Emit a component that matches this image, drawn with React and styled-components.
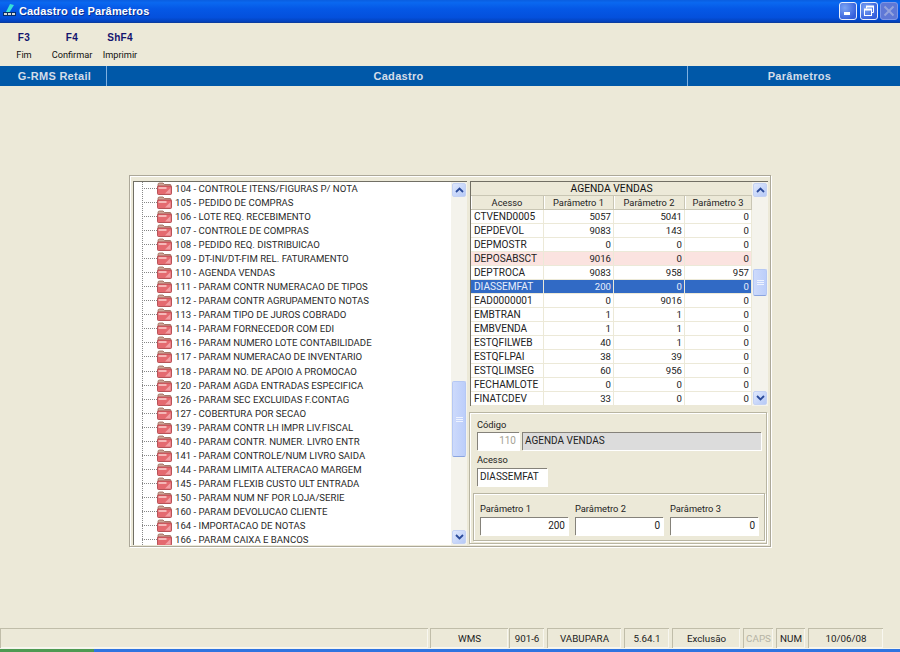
import styled, { createGlobalStyle } from "styled-components";

const GlobalStyle = createGlobalStyle`
  html, body { margin: 0; padding: 0; background: #ece9d8; }
  body { font-family: Roboto, "Liberation Sans", Arial, sans-serif; font-size: 10.5px; color: #111; }
`;

const TREE_ITEMS = [
  "104 - CONTROLE ITENS/FIGURAS P/ NOTA",
  "105 - PEDIDO DE COMPRAS",
  "106 - LOTE REQ. RECEBIMENTO",
  "107 - CONTROLE DE COMPRAS",
  "108 - PEDIDO REQ. DISTRIBUICAO",
  "109 - DT-INI/DT-FIM REL. FATURAMENTO",
  "110 - AGENDA VENDAS",
  "111 - PARAM CONTR NUMERACAO DE TIPOS",
  "112 - PARAM CONTR AGRUPAMENTO NOTAS",
  "113 - PARAM TIPO DE JUROS COBRADO",
  "114 - PARAM FORNECEDOR COM EDI",
  "116 - PARAM NUMERO LOTE CONTABILIDADE",
  "117 - PARAM NUMERACAO DE INVENTARIO",
  "118 - PARAM NO. DE APOIO A PROMOCAO",
  "120 - PARAM AGDA ENTRADAS ESPECIFICA",
  "126 - PARAM SEC EXCLUIDAS F.CONTAG",
  "127 - COBERTURA POR SECAO",
  "139 - PARAM CONTR LH IMPR LIV.FISCAL",
  "140 - PARAM CONTR. NUMER. LIVRO ENTR",
  "141 - PARAM CONTROLE/NUM LIVRO SAIDA",
  "144 - PARAM LIMITA ALTERACAO MARGEM",
  "145 - PARAM FLEXIB CUSTO ULT ENTRADA",
  "150 - PARAM NUM NF POR LOJA/SERIE",
  "160 - PARAM DEVOLUCAO CLIENTE",
  "164 - IMPORTACAO DE NOTAS",
  "166 - PARAM CAIXA E BANCOS",
];

const GRID_ROWS = [
  ["CTVEND0005", 5057, 5041, 0],
  ["DEPDEVOL", 9083, 143, 0],
  ["DEPMOSTR", 0, 0, 0],
  ["DEPOSABSCT", 9016, 0, 0, "pink"],
  ["DEPTROCA", 9083, 958, 957],
  ["DIASSEMFAT", 200, 0, 0, "selected"],
  ["EAD0000001", 0, 9016, 0],
  ["EMBTRAN", 1, 1, 0],
  ["EMBVENDA", 1, 1, 0],
  ["ESTQFILWEB", 40, 1, 0],
  ["ESTQFLPAI", 38, 39, 0],
  ["ESTQLIMSEG", 60, 956, 0],
  ["FECHAMLOTE", 0, 0, 0],
  ["FINATCDEV", 33, 0, 0],
];

const STATUS_CELLS = [
  { text: "", width: 428, gap: 0 },
  { text: "WMS", width: 78, gap: 2 },
  { text: "901-6", width: 35, gap: 1 },
  { text: "VABUPARA", width: 74, gap: 3 },
  { text: "5.64.1", width: 45, gap: 3 },
  { text: "Exclusão", width: 68, gap: 3 },
  { text: "CAPS", width: 30, gap: 3, muted: true },
  { text: "NUM", width: 29, gap: 3 },
  { text: "10/06/08", width: 75, gap: 3 },
];

const Page = styled.div`
  width: 900px;
  height: 652px;
  overflow: hidden;
  display: flex;
  flex-direction: column;
  background: #ece9d8;
`;

const TitleBar = styled.div`
  height: 23px;
  display: flex;
  align-items: center;
  padding: 0 2px 0 3px;
  box-sizing: border-box;
  background: linear-gradient(180deg, #0a5ee0 0%, #0a68f0 12%, #0558e6 40%, #0450dc 80%, #0340b8 100%);
  border-bottom: 1px solid #0a3ca0;
`;

const TitleText = styled.div`
  flex: 1;
  padding-left: 3px;
  color: #fff;
  font-family: "Liberation Sans", Arial, sans-serif;
  font-weight: bold;
  font-size: 11px;
  letter-spacing: 0.15px;
  text-shadow: 1px 1px 0 #0a2f90;
`;

const WinButton = styled.div`
  width: 18px;
  height: 18px;
  margin-left: ${(p) => p.$gap}px;
  box-sizing: border-box;
  border: 1px solid ${(p) => (p.$off ? "#7f97e6" : "#e8eefc")};
  border-radius: 3px;
  display: flex;
  align-items: center;
  justify-content: center;
  background: ${(p) =>
    p.$off ? "#5f78d6" : "radial-gradient(circle at 30% 30%, #7ba4f4, #3560dc 75%)"};
`;

const Toolbar = styled.div`
  height: 43px;
  display: flex;
  padding: 9px 0 0 0;
  box-sizing: border-box;
`;

const ToolButton = styled.div`
  width: ${(p) => p.$w}px;
  display: flex;
  flex-direction: column;
  align-items: center;
  gap: 6px;
`;

const ToolKey = styled.div`
  font-family: "Liberation Sans", Arial, sans-serif;
  font-weight: bold;
  font-size: 10px;
  color: #14146e;
  letter-spacing: 0.3px;
`;

const ToolLabel = styled.div`
  font-size: 9.2px;
  color: #111;
`;

const ModuleBar = styled.div`
  height: 20px;
  display: flex;
  background: #0058a8;
`;

const ModuleCell = styled.div`
  width: ${(p) => p.$w}px;
  box-sizing: border-box;
  padding-left: ${(p) => p.$pad || 0}px;
  display: flex;
  align-items: center;
  justify-content: center;
  border-left: ${(p) => (p.$divider ? "1px solid #7fb0e0" : "none")};
  color: #d4dde8;
  font-family: "Liberation Sans", Arial, sans-serif;
  font-weight: bold;
  font-size: 11px;
  letter-spacing: 0.3px;
`;

const Main = styled.div`
  flex: 1;
  padding: 89px 0 0 129px;
  box-sizing: border-box;
`;

const Panel = styled.div`
  width: 642px;
  height: 372px;
  box-sizing: border-box;
  border: 1px solid #aca899;
  box-shadow: inset 1px 1px 0 #fff, 1px 1px 0 #fff;
  padding: 5px 2px 1px 3px;
  display: flex;
`;

const TreeBox = styled.div`
  width: 334px;
  height: 364px;
  flex: none;
  display: flex;
  background: #fff;
  border-top: 1px solid #716f64;
  border-left: 1px solid #716f64;
  box-sizing: border-box;
`;

const TreeList = styled.div`
  flex: 1;
  overflow: hidden;
  padding-left: 8px;
  background-image: linear-gradient(#888 50%, transparent 50%);
  background-size: 1px 2px;
  background-repeat: repeat-y;
  background-position: 8px 0;
`;

const TreeRow = styled.div`
  height: 14.08px;
  display: flex;
  align-items: center;
  white-space: nowrap;
  &:first-child {
    margin-top: -1px;
  }
`;

const TreeDots = styled.div`
  width: 15px;
  height: 0;
  border-top: 1px dotted #888;
`;

const TreeLabel = styled.span`
  margin-left: 3px;
  font-size: 9.6px;
  color: #2a2a2a;
`;

const Scrollbar = styled.div`
  width: 16px;
  flex: none;
  height: ${(p) => p.$h}px;
  background: #f4f3ec;
  display: flex;
  flex-direction: column;
  box-sizing: border-box;
  padding: 1px;
`;

const ScrollButton = styled.div`
  height: 14px;
  flex: none;
  border-radius: 2px;
  border: 1px solid #c4d2f4;
  box-sizing: border-box;
  background: linear-gradient(135deg, #dfe8fd, #b6c9f6);
  display: flex;
  align-items: center;
  justify-content: center;
`;

const ScrollSpace = styled.div`
  flex: ${(p) => (p.$h ? "none" : 1)};
  height: ${(p) => (p.$h ? `${p.$h}px` : "auto")};
`;

const ScrollThumb = styled.div`
  height: ${(p) => p.$h}px;
  flex: none;
  box-sizing: border-box;
  border: 1px solid #b5c8f4;
  border-bottom-color: #8aa4e0;
  border-radius: 2px;
  background: linear-gradient(90deg, #cddafb, #bccefa);
  display: flex;
  align-items: center;
  justify-content: center;
`;

const Right = styled.div`
  width: 298px;
  flex: none;
  margin-left: 3px;
  display: flex;
  flex-direction: column;
`;

const GridBox = styled.div`
  height: 225px;
  display: flex;
  background: #fff;
  border-top: 1px solid #716f64;
  border-left: 1px solid #716f64;
  box-sizing: border-box;
`;

const GridTable = styled.div`
  width: 281px;
  flex: none;
  overflow: hidden;
`;

const GridTitle = styled.div`
  height: 14px;
  line-height: 13px;
  text-align: center;
  font-size: 10.3px;
  background: #ece9d8;
  border-bottom: 1px solid #c9c6b4;
  box-sizing: border-box;
`;

const GridHead = styled.div`
  display: grid;
  grid-template-columns: 73px 70px 71px 67px;
  height: 14px;
  background: #ece9d8;
  border-bottom: 1px solid #c9c6b4;
  box-sizing: border-box;
`;

const HeadCell = styled.div`
  text-align: center;
  line-height: 13px;
  font-size: 9.3px;
  color: #222;
  border-right: 1px solid #c9c6b4;
  box-shadow: inset 1px 0 0 #fff;
`;

const GridRow = styled.div`
  display: grid;
  grid-template-columns: 73px 70px 71px 67px;
  height: 14px;
  box-sizing: border-box;
  border-bottom: 1px solid #ece9d8;
  background: ${(p) =>
    p.$tone === "selected" ? "#316ac5" : p.$tone === "pink" ? "#fbe3e0" : "#fff"};
  color: ${(p) => (p.$tone === "selected" ? "#e8eefb" : "#222")};
`;

const GridCell = styled.div`
  line-height: 13px;
  font-size: ${(p) => (p.$num ? "9.6px" : "10.1px")};
  padding: 0 2px 0 3px;
  text-align: ${(p) => (p.$num ? "right" : "left")};
  border-right: 1px solid #ece9d8;
  overflow: hidden;
  white-space: nowrap;
`;

const Group = styled.div`
  margin: 6px 0 0 -1px;
  width: 298px;
  height: 132px;
  flex: none;
  box-sizing: border-box;
  border: 1px solid #b8b5a2;
  box-shadow: inset 1px 1px 0 #fff, 1px 1px 0 #fff;
  padding: 6px 4px 0 7px;
  display: flex;
  flex-direction: column;
`;

const FieldLabel = styled.div`
  font-size: 9.3px;
  color: #222;
  line-height: 12px;
`;

const FieldRow = styled.div`
  display: flex;
  gap: 3px;
  margin: 1px 0 4px;
`;

const AccessRow = styled(FieldRow)`
  margin: 2px 0 0;
`;

const Field = styled.div`
  width: ${(p) => p.$w}px;
  height: 18px;
  flex: none;
  box-sizing: border-box;
  background: ${(p) => p.$bg || "#fff"};
  border-top: 1px solid #85827a;
  border-left: 1px solid #85827a;
  box-shadow: 1px 1px 0 #fff;
  padding: 0 3px 0 2px;
  line-height: 15px;
  font-size: 10px;
  color: ${(p) => p.$color || "#222"};
  text-align: ${(p) => (p.$right ? "right" : "left")};
  white-space: nowrap;
`;

const ParamGroup = styled.div`
  margin: 7px 0 0 -4px;
  width: 292px;
  height: 48px;
  flex: none;
  box-sizing: border-box;
  border: 1px solid #b8b5a2;
  box-shadow: inset 1px 1px 0 #fff, 1px 1px 0 #fff;
  padding: 9px 6px 0 6px;
  display: flex;
  gap: 7px;
`;

const ParamItem = styled.div`
  display: flex;
  flex-direction: column;
  gap: 2px;
`;

const StatusBar = styled.div`
  height: 20px;
  display: flex;
  flex: none;
`;

const StatusCell = styled.div`
  width: ${(p) => p.$w}px;
  margin-left: ${(p) => p.$gap}px;
  box-sizing: border-box;
  flex: none;
  text-align: center;
  line-height: 19px;
  font-size: 9.8px;
  color: ${(p) => (p.$muted ? "#b5b3a5" : "#222")};
  border-top: 1px solid #c0bda9;
  border-left: 1px solid #c0bda9;
  box-shadow: inset -1px -1px 0 #f8f7f0;
`;

const Taskbar = styled.div`
  height: 4px;
  flex: none;
  display: flex;
  background: #2f74e0;
  border-top: 1px solid #f5f4ec;
  box-sizing: border-box;
`;

const StartEdge = styled.div`
  width: 94px;
  background: #4e9a52;
`;

const AppIcon = () => (
  <svg width="13" height="16" viewBox="0 0 13 16" style={{ flex: "none" }}>
    <path d="M7 1 L11 2 L6 10 L3 9 Z" fill="#35e0d8" />
    <path d="M0 9 h13 v4 H0 Z" fill="#08306a" />
    <path d="M1 10 h3 v2 H1 Z M5 10 h3 v2 H5 Z M9 10 h3 v2 H9 Z" fill="#d8d8d8" />
  </svg>
);

const MinIcon = () => (
  <svg width="10" height="10" viewBox="0 0 10 10">
    <rect x="1" y="6" width="6" height="3" fill="#fff" />
  </svg>
);

const RestoreIcon = () => (
  <svg width="12" height="12" viewBox="0 0 12 12" fill="none" stroke="#fff">
    <path d="M3.5 3.5 V1.5 H10.5 V7.5 H8.5" strokeWidth="1" />
    <rect x="1.5" y="4.5" width="7" height="6" strokeWidth="1" />
    <path d="M1 4.5 H9 M3 1.5 H11" strokeWidth="2" />
  </svg>
);

const CloseIcon = () => (
  <svg width="12" height="12" viewBox="0 0 12 12">
    <path d="M1.5 1.5 L10.5 10.5 M10.5 1.5 L1.5 10.5" stroke="#94a3dd" strokeWidth="2" />
  </svg>
);

const FolderIcon = () => (
  <svg width="15" height="13" viewBox="0 0 15 13" style={{ flex: "none" }}>
    <path d="M1 2.5 Q1 1 2.5 1 H6 L7.5 2.5 H13 Q14 2.5 14 3.5 V5 H1 Z" fill="#cfa69a" stroke="#96604f" strokeWidth="0.8" />
    <rect x="0.5" y="4" width="14" height="8.5" rx="1" fill="#e46a70" stroke="#a83a40" strokeWidth="0.8" />
    <rect x="1.5" y="5" width="8" height="2" fill="#f4b8b8" />
    <path d="M8 11.5 L13.5 6 V11.5 Z" fill="#f2a0a6" />
  </svg>
);

const Arrow = ({ down }) => (
  <svg width="9" height="6" viewBox="0 0 9 6">
    <path
      d={down ? "M1 1 L4.5 4.5 L8 1" : "M1 5 L4.5 1.5 L8 5"}
      fill="none"
      stroke="#2a4a9a"
      strokeWidth="1.8"
    />
  </svg>
);

const Grip = () => (
  <svg width="7" height="7" viewBox="0 0 7 7">
    <path d="M0 1.5 H7 M0 3.5 H7 M0 5.5 H7" stroke="#eef3ff" strokeWidth="1" />
  </svg>
);

const VScroll = ({ height, before, thumb }) => (
  <Scrollbar $h={height}>
    <ScrollButton>
      <Arrow />
    </ScrollButton>
    <ScrollSpace $h={before} />
    <ScrollThumb $h={thumb}>
      <Grip />
    </ScrollThumb>
    <ScrollSpace />
    <ScrollButton>
      <Arrow down />
    </ScrollButton>
  </Scrollbar>
);

export default function App() {
  return (
    <Page>
      <GlobalStyle />
      <TitleBar>
        <AppIcon />
        <TitleText>Cadastro de Parâmetros</TitleText>
        <WinButton $gap={0}>
          <MinIcon />
        </WinButton>
        <WinButton $gap={3}>
          <RestoreIcon />
        </WinButton>
        <WinButton $gap={2} $off>
          <CloseIcon />
        </WinButton>
      </TitleBar>
      <Toolbar>
        <ToolButton $w={48}>
          <ToolKey>F3</ToolKey>
          <ToolLabel>Fim</ToolLabel>
        </ToolButton>
        <ToolButton $w={48}>
          <ToolKey>F4</ToolKey>
          <ToolLabel>Confirmar</ToolLabel>
        </ToolButton>
        <ToolButton $w={48}>
          <ToolKey>ShF4</ToolKey>
          <ToolLabel>Imprimir</ToolLabel>
        </ToolButton>
      </Toolbar>
      <ModuleBar>
        <ModuleCell $w={106} $pad={3}>G-RMS Retail</ModuleCell>
        <ModuleCell $w={581} $pad={3} $divider>Cadastro</ModuleCell>
        <ModuleCell $w={213} $pad={11} $divider>Parâmetros</ModuleCell>
      </ModuleBar>
      <Main>
        <Panel>
          <TreeBox>
            <TreeList>
              {TREE_ITEMS.map((item) => (
                <TreeRow key={item}>
                  <TreeDots />
                  <FolderIcon />
                  <TreeLabel>{item}</TreeLabel>
                </TreeRow>
              ))}
            </TreeList>
            <VScroll height={363} before={184} thumb={76} />
          </TreeBox>
          <Right>
            <GridBox>
              <GridTable>
                <GridTitle>AGENDA VENDAS</GridTitle>
                <GridHead>
                  <HeadCell>Acesso</HeadCell>
                  <HeadCell>Parâmetro 1</HeadCell>
                  <HeadCell>Parâmetro 2</HeadCell>
                  <HeadCell>Parâmetro 3</HeadCell>
                </GridHead>
                {GRID_ROWS.map(([name, a, b, c, tone]) => (
                  <GridRow key={name} $tone={tone}>
                    <GridCell>{name}</GridCell>
                    <GridCell $num>{a}</GridCell>
                    <GridCell $num>{b}</GridCell>
                    <GridCell $num>{c}</GridCell>
                  </GridRow>
                ))}
              </GridTable>
              <VScroll height={224} before={72} thumb={27} />
            </GridBox>
            <Group>
              <FieldLabel>Código</FieldLabel>
              <FieldRow>
                <Field $w={42} $right $color="#a5a295">110</Field>
                <Field $w={239} $bg="#dcdcdc">AGENDA VENDAS</Field>
              </FieldRow>
              <FieldLabel>Acesso</FieldLabel>
              <AccessRow>
                <Field $w={70}>DIASSEMFAT</Field>
              </AccessRow>
              <ParamGroup>
                <ParamItem>
                  <FieldLabel>Parâmetro 1</FieldLabel>
                  <Field $w={88} $right>200</Field>
                </ParamItem>
                <ParamItem>
                  <FieldLabel>Parâmetro 2</FieldLabel>
                  <Field $w={88} $right>0</Field>
                </ParamItem>
                <ParamItem>
                  <FieldLabel>Parâmetro 3</FieldLabel>
                  <Field $w={88} $right>0</Field>
                </ParamItem>
              </ParamGroup>
            </Group>
          </Right>
        </Panel>
      </Main>
      <StatusBar>
        {STATUS_CELLS.map((cell) => (
          <StatusCell key={cell.text || "blank"} $w={cell.width} $gap={cell.gap} $muted={cell.muted}>
            {cell.text}
          </StatusCell>
        ))}
      </StatusBar>
      <Taskbar>
        <StartEdge />
      </Taskbar>
    </Page>
  );
}
